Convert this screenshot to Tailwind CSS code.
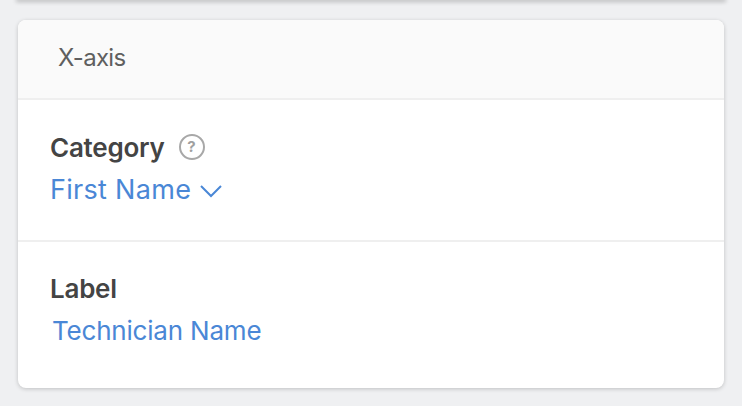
<!DOCTYPE html>
<html>
<head>
<meta charset="utf-8">
<script src="https://cdn.jsdelivr.net/npm/@tailwindcss/browser@4"></script>
</head>
<body class="bg-[#eff0f2] w-[742px] h-[406px] overflow-hidden font-['Inter','Liberation_Sans',sans-serif]">
  <!-- bottom edge of the card above -->
  <div class="mx-[18px] h-0 shadow-[0_0_4px_2px_rgba(0,0,0,0.22)]"></div>

  <!-- X-axis card -->
  <div class="mx-[18px] mt-[20px] h-[368px] bg-white rounded-[8px] shadow-[0_1px_4px_rgba(0,0,0,0.2)] overflow-hidden">
    <div class="h-[80px] bg-[#fafafa] border-b-2 border-[#efefef] pl-[40px] pt-[19px]">
      <span class="text-[24px] tracking-[-0.7px] leading-[38px] text-[#5f5f5f]">X-axis</span>
    </div>

    <div class="h-[142px] border-b-2 border-[#efefef] pl-[32px] pt-[29px]">
      <div class="flex items-center gap-[14px] h-[36px]">
        <span class="text-[26px] tracking-[-0.25px] font-semibold text-[#444444]">Category</span>
        <span class="w-[26px] h-[26px] rounded-full border-2 border-[#a8a8a8] text-[#a0a0a0] text-[15px] font-bold flex items-center justify-center">?</span>
      </div>
      <div class="flex items-center gap-[9px] h-[44px] mt-[3px] text-[#4a87d6]">
        <span class="text-[27px] tracking-[0.3px]">First Name</span>
        <svg class="w-[22px] h-[14px] mt-[2px]" viewBox="0 0 22 14" fill="none" stroke="currentColor" stroke-width="2">
          <path d="M1 2l10 10L21 2"/>
        </svg>
      </div>
    </div>

    <div class="pl-[32px] pt-[28px]">
      <div class="h-[36px] flex items-center text-[26px] tracking-[-0.25px] font-semibold text-[#444444]">Label</div>
      <div class="h-[44px] mt-[2px] flex items-center pl-[2px] text-[26px] tracking-[-0.2px] text-[#4a87d6]">Technician Name</div>
    </div>
  </div>
</body>
</html>
